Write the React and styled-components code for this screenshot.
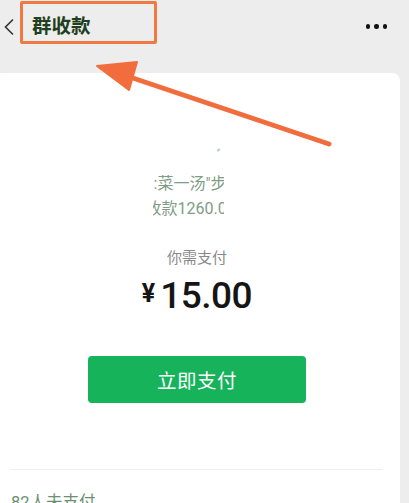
import React from "react";
import styled, { createGlobalStyle } from "styled-components";

const GlobalStyle = createGlobalStyle`
  html, body {
    margin: 0;
    padding: 0;
    background: #ededed;
  }
  body {
    font-family: Roboto, "Noto Sans CJK SC", sans-serif;
  }
`;

const Page = styled.div`
  position: relative;
  width: 409px;
  height: 503px;
  overflow: hidden;
  background: #ededed;
`;

const Header = styled.header`
  height: 73px;
  display: flex;
  align-items: center;
  padding-bottom: 20px;
  box-sizing: border-box;
  padding-left: 3px;
  padding-right: 22px;
`;

const Back = styled.span`
  display: flex;
  width: 12px;
  margin-right: 17px;
`;

const Title = styled.h1`
  margin: 0;
  flex: 1;
  font-size: 19.5px;
  font-weight: 700;
  color: #1f3f20;
  line-height: 26px;
`;

const More = styled.div`
  display: flex;
  gap: 4px;
  span {
    width: 4.5px;
    height: 4.5px;
    border-radius: 50%;
    background: #111;
  }
`;

const Card = styled.main`
  margin-left: -6px;
  margin-right: 9px;
  background: #fff;
  border-radius: 8px 8px 0 0;
  padding: 0 17px;
  display: flex;
  flex-direction: column;
  align-items: center;
  min-height: 440px;
`;

const Spark = styled.div`
  width: 3px;
  height: 2px;
  margin-top: 76px;
  margin-left: 42px;
  background: #a9cdb5;
  transform: rotate(-40deg);
`;

const ClipLine = styled.div`
  width: 71px;
  margin-top: ${(p) => p.$top}px;
  margin-left: -18px;
  overflow: hidden;
  white-space: nowrap;
  font-size: 16px;
  line-height: 25px;
  color: #7f9c85;
  span {
    display: inline-block;
    margin-left: ${(p) => p.$shift}px;
  }
`;

const Need = styled.div`
  margin-top: 26px;
  font-size: 15px;
  line-height: 22px;
  color: #8a8a8a;
`;

const Amount = styled.div`
  margin-top: 5px;
  display: flex;
  align-items: baseline;
  line-height: 44px;
  color: #151515;
  b {
    font-size: 25px;
    font-weight: 700;
    margin-right: 5px;
    position: relative;
    top: -6px;
  }
  span {
    font-size: 37px;
    font-weight: 500;
    letter-spacing: -0.5px;
  }
`;

const PayButton = styled.button`
  margin-top: 34px;
  width: 218px;
  height: 47px;
  border: none;
  border-radius: 4px;
  background: #17b35b;
  color: #fff;
  font-family: inherit;
  font-size: 19.5px;
  letter-spacing: 0.5px;
`;

const Divider = styled.hr`
  align-self: stretch;
  margin: 66px 0 0;
  border: none;
  height: 1px;
  background: #efefef;
`;

const Unpaid = styled.div`
  align-self: flex-start;
  margin-top: 22px;
  font-size: 16.5px;
  line-height: 22px;
  color: #6e8f72;
`;

const Highlight = styled.div`
  position: absolute;
  left: 20px;
  top: 1px;
  width: 131px;
  height: 37px;
  border: 3.5px solid #f07843;
  border-radius: 2px;
`;

const Arrow = styled.svg`
  position: absolute;
  left: 0;
  top: 0;
  pointer-events: none;
`;

export default function App() {
  return (
    <>
      <GlobalStyle />
      <Page>
        <Header>
          <Back>
            <svg width="12" height="18" viewBox="0 0 12 18">
              <path d="M10 1.5 L2.5 9 L10 16.5" fill="none" stroke="#333" strokeWidth="1.6" />
            </svg>
          </Back>
          <Title>群收款</Title>
          <More>
            <span />
            <span />
            <span />
          </More>
        </Header>
        <Card>
          <Spark />
          <ClipLine $top={20} $shift={1}>
            <span>:菜一汤"步行</span>
          </ClipLine>
          <ClipLine $top={0} $shift={-7}>
            <span>收款1260.00</span>
          </ClipLine>
          <Need>你需支付</Need>
          <Amount>
            <b>¥</b>
            <span>15.00</span>
          </Amount>
          <PayButton>立即支付</PayButton>
          <Divider />
          <Unpaid>82人未支付</Unpaid>
        </Card>
        <Highlight />
        <Arrow width="409" height="503" viewBox="0 0 409 503">
          <line x1="329" y1="144" x2="112" y2="71" stroke="#f26d3d" strokeWidth="5" strokeLinecap="round" />
          <polygon points="97,66 137,62 129,90" fill="#f26d3d" stroke="#f26d3d" strokeWidth="2" strokeLinejoin="round" />
        </Arrow>
      </Page>
    </>
  );
}
